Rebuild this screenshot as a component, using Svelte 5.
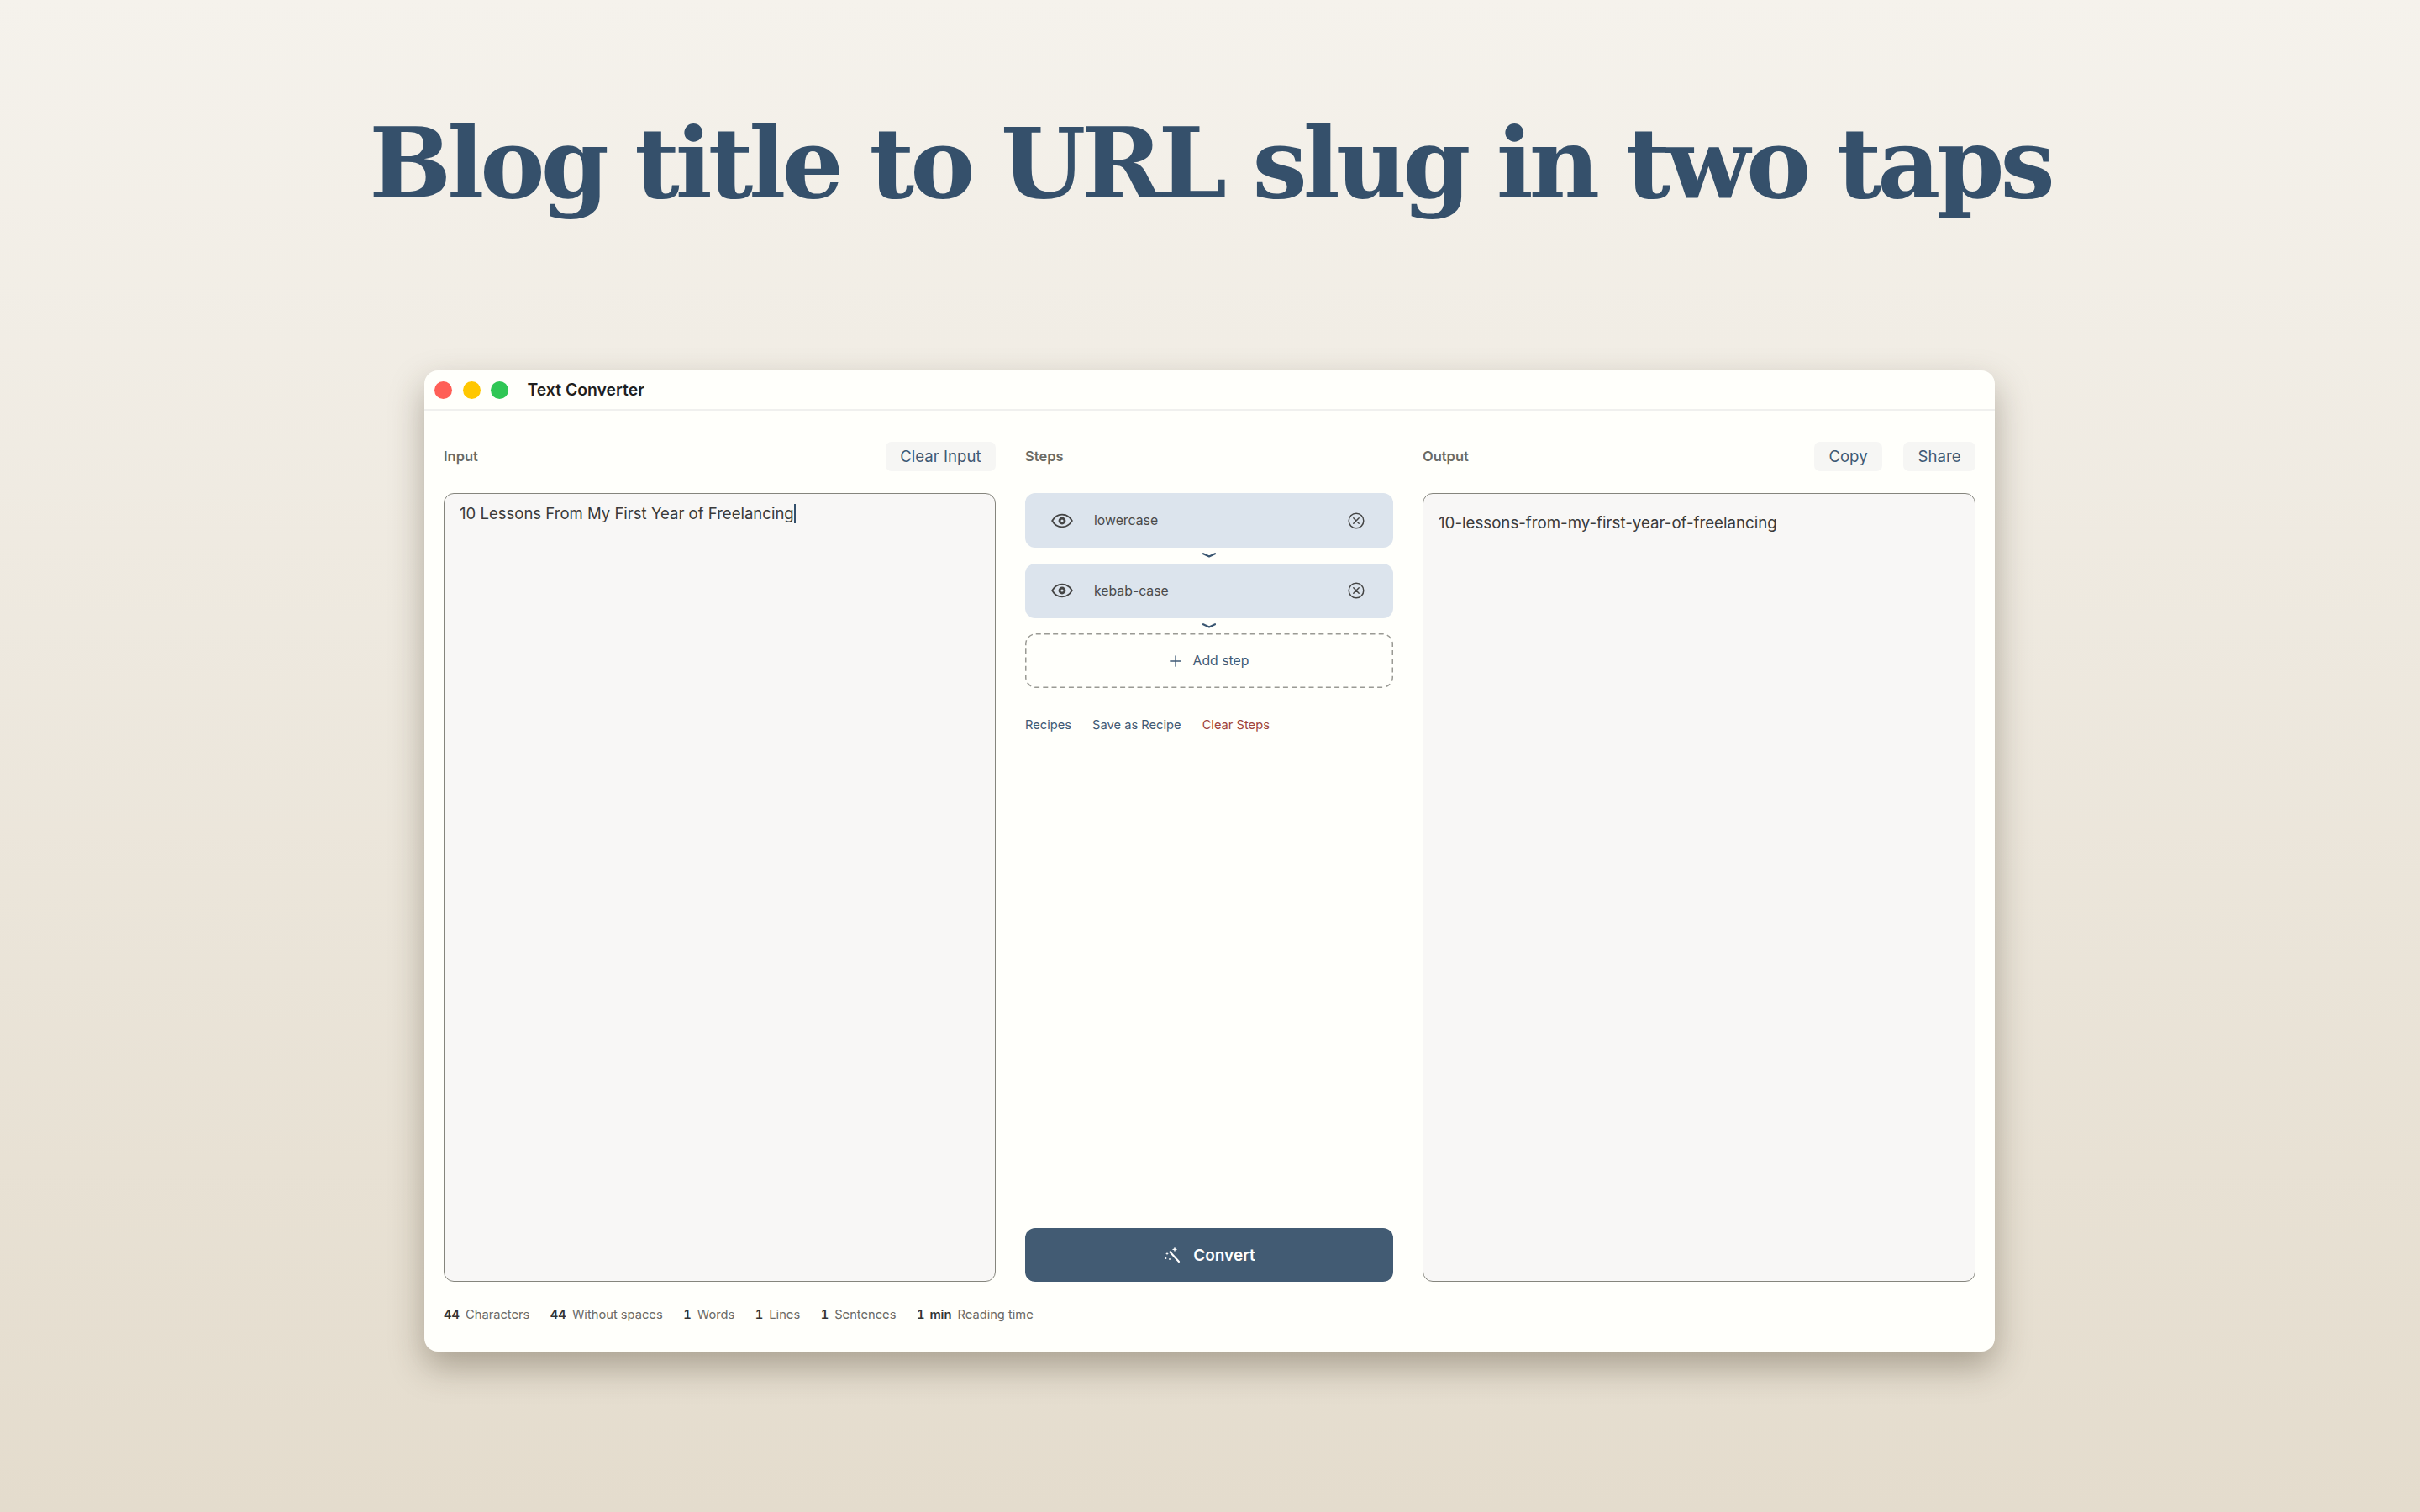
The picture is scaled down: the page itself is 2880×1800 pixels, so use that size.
<script>
  const stats = [
    ['44', 'Characters'],
    ['44', 'Without spaces'],
    ['1', 'Words'],
    ['1', 'Lines'],
    ['1', 'Sentences'],
    ['1 min', 'Reading time']
  ];
  const steps = ['lowercase', 'kebab-case'];
</script>

<div class="page">
  <h1>Blog title to URL slug in two taps</h1>
  <div class="window">
    <header class="titlebar">
      <span class="light red"></span>
      <span class="light yellow"></span>
      <span class="light green"></span>
      <span class="wintitle">Text Converter</span>
    </header>
    <main class="body">
      <div class="cols">
        <section class="col">
          <div class="head">
            <span class="label">Input</span>
            <div class="btns"><button class="ghost">Clear Input</button></div>
          </div>
          <div class="box input">10 Lessons From My First Year of Freelancing<span class="caret"></span></div>
        </section>
        <section class="col">
          <div class="head"><span class="label">Steps</span></div>
          <div class="stack">
            {#each steps as s}
              <div class="step">
                <svg class="eye" viewBox="0 0 26 18" fill="none" stroke="currentColor" stroke-width="1.8">
                  <path d="M1.2 9C4 4 8 1.6 13 1.6S22 4 24.8 9C22 14 18 16.4 13 16.4S4 14 1.2 9Z" />
                  <circle cx="13" cy="9" r="3" stroke-width="2.8" />
                </svg>
                <span class="stepname">{s}</span>
                <svg class="x" viewBox="0 0 20 20" fill="none" stroke="currentColor" stroke-width="1.5">
                  <circle cx="10" cy="10" r="8.8" />
                  <path d="M6.8 6.8l6.4 6.4M13.2 6.8l-6.4 6.4" stroke-linecap="round" />
                </svg>
              </div>
              <div class="conn">
                <svg width="16" height="6" viewBox="0 0 16 6" fill="none" stroke="#3a5671" stroke-width="2.2" stroke-linecap="round">
                  <path d="M1 1.2L8 4.4L15 1.2" stroke-linejoin="round" />
                </svg>
              </div>
            {/each}
            <div class="add">
              <svg class="dash" viewBox="0 0 438 65" fill="none">
                <rect x=".75" y=".75" width="436.5" height="63.5" rx="12" stroke="#9a9a94" stroke-width="1.5" stroke-dasharray="6 4.2" />
              </svg>
              <svg width="14" height="14" viewBox="0 0 14 14" fill="none" stroke="#3f5a75" stroke-width="1.3" stroke-linecap="round">
                <path d="M7 .8v12.4M.8 7h12.4" />
              </svg>
              <span>Add step</span>
            </div>
            <div class="links">
              <span>Recipes</span>
              <span>Save as Recipe</span>
              <span class="danger">Clear Steps</span>
            </div>
          </div>
          <button class="convert">
            <svg width="22" height="22" viewBox="0 0 22 22" fill="none" stroke="#fff" stroke-linecap="round">
              <path d="M8.5 7.5L19 19" stroke-width="2.2" />
              <path d="M14 1.2l.8 2.4 2.4.8-2.4.8-.8 2.4-.8-2.4-2.4-.8 2.4-.8z" fill="#fff" stroke="none" />
              <path d="M5 7.5l.5 1.5 1.5.5-1.5.5-.5 1.5-.5-1.5L3 9.5l1.5-.5z" fill="#fff" stroke="none" />
              <circle cx="3.5" cy="15" r=".9" fill="#fff" stroke="none" />
              <circle cx="8" cy="16" r=".9" fill="#fff" stroke="none" />
            </svg>
            <span>Convert</span>
          </button>
        </section>
        <section class="col">
          <div class="head">
            <span class="label">Output</span>
            <div class="btns">
              <button class="ghost">Copy</button>
              <button class="ghost">Share</button>
            </div>
          </div>
          <div class="box output">10-lessons-from-my-first-year-of-freelancing</div>
        </section>
      </div>
      <footer class="stats">
        {#each stats as [n, l]}
          <span class="stat"><b>{n}</b><span>{l}</span></span>
        {/each}
      </footer>
    </main>
  </div>
</div>

<style>
  :global(body) {
    margin: 0;
    background: #fff;
  }
  .page {
    width: 2880px;
    height: 1800px;
    overflow: hidden;
    background: linear-gradient(180deg, #f5f2ec 0%, #e4dccd 100%);
    font-family: Inter, "Noto Sans", sans-serif;
    display: flex;
    flex-direction: column;
  }
  h1 {
    margin: 0;
    height: 441px;
    line-height: 388px;
    text-align: center;
    font-family: "DejaVu Serif", serif;
    font-weight: 700;
    font-size: 116px;
    letter-spacing: -5px;
    color: #35506b;
    white-space: nowrap;
  }
  .window {
    margin-left: 505px;
    width: 1869px;
    height: 1168px;
    border-radius: 16px;
    background: #fffffb;
    box-shadow: 0 18px 40px rgba(60, 50, 30, 0.36);
    display: flex;
    flex-direction: column;
    overflow: hidden;
  }
  .titlebar {
    height: 46px;
    border-bottom: 2px solid #f0f0ee;
    display: flex;
    align-items: center;
    padding-left: 12px;
    gap: 12.5px;
    flex: none;
  }
  .light {
    width: 21px;
    height: 21px;
    border-radius: 50%;
  }
  .red { background: #ff5f57; }
  .yellow { background: #ffc700; }
  .green { background: #2fc655; }
  .wintitle {
    margin-left: 10px;
    font-size: 19.4px;
    font-weight: 600;
    color: #1f1f1f;
  }
  .body {
    flex: 1;
    padding: 37px 23px 0;
    display: flex;
    flex-direction: column;
  }
  .cols {
    display: grid;
    grid-template-columns: 657px 438px 658px;
    gap: 35px;
    height: 1000px;
  }
  .col {
    display: flex;
    flex-direction: column;
  }
  .head {
    height: 34px;
    margin-bottom: 27px;
    display: flex;
    align-items: center;
    justify-content: space-between;
    flex: none;
  }
  .label {
    font-size: 16.5px;
    font-weight: 600;
    color: #6b6b65;
  }
  .btns {
    display: flex;
    gap: 25px;
  }
  .ghost {
    height: 35px;
    padding: 0 17.5px;
    border: 0;
    border-radius: 7px;
    background: #f6f6f4;
    color: #3f5a75;
    font: 400 18.6px Inter, sans-serif;
  }
  .box {
    flex: 1;
    box-sizing: border-box;
    border: 1.5px solid #85857d;
    border-radius: 12px;
    background: #f8f7f6;
    color: #3a3a3a;
    padding-left: 18px;
  }
  .input {
    font-size: 18.55px;
    padding-top: 10px;
    line-height: 26px;
  }
  .output {
    font-size: 18.7px;
    padding-top: 22px;
    line-height: 26px;
  }
  .caret {
    display: inline-block;
    width: 2px;
    height: 23px;
    vertical-align: -5px;
    background: #34506c;
  }
  .stack {
    flex: 1;
    display: flex;
    flex-direction: column;
  }
  .step {
    height: 65px;
    border-radius: 12px;
    background: #dce4ed;
    display: flex;
    align-items: center;
    padding: 0 34px 0 31px;
    color: #444;
  }
  .eye {
    width: 26px;
    height: 18px;
    flex: none;
  }
  .stepname {
    margin-left: 25px;
    flex: 1;
    font-size: 15.8px;
    color: #4a4a4a;
  }
  .x {
    width: 20px;
    height: 20px;
    flex: none;
  }
  .conn {
    height: 18.5px;
    display: flex;
    align-items: center;
    justify-content: center;
  }
  .add {
    position: relative;
    height: 65px;
    display: flex;
    align-items: center;
    justify-content: center;
    gap: 14px;
    color: #3f5a75;
    font-size: 15.8px;
  }
  .dash {
    position: absolute;
    inset: 0;
    width: 100%;
    height: 100%;
  }
  .links {
    margin-top: 34px;
    display: flex;
    gap: 25px;
    font-size: 14.7px;
    color: #3f5a75;
    line-height: 20px;
  }
  .danger {
    color: #a0443c;
  }
  .convert {
    height: 64px;
    flex: none;
    border: 0;
    border-radius: 12px;
    background: #425b73;
    color: #fff;
    display: flex;
    align-items: center;
    justify-content: center;
    gap: 14px;
    font: 600 19px Inter, sans-serif;
  }
  .stats {
    margin-top: 29px;
    display: flex;
    gap: 24.5px;
    font-size: 14.7px;
    line-height: 20px;
    color: #6a6a66;
  }
  .stat {
    display: flex;
    gap: 7px;
  }
  .stat b {
    font-weight: 600;
    font-variant-numeric: tabular-nums;
    word-spacing: 2px;
    color: #333;
  }
</style>
